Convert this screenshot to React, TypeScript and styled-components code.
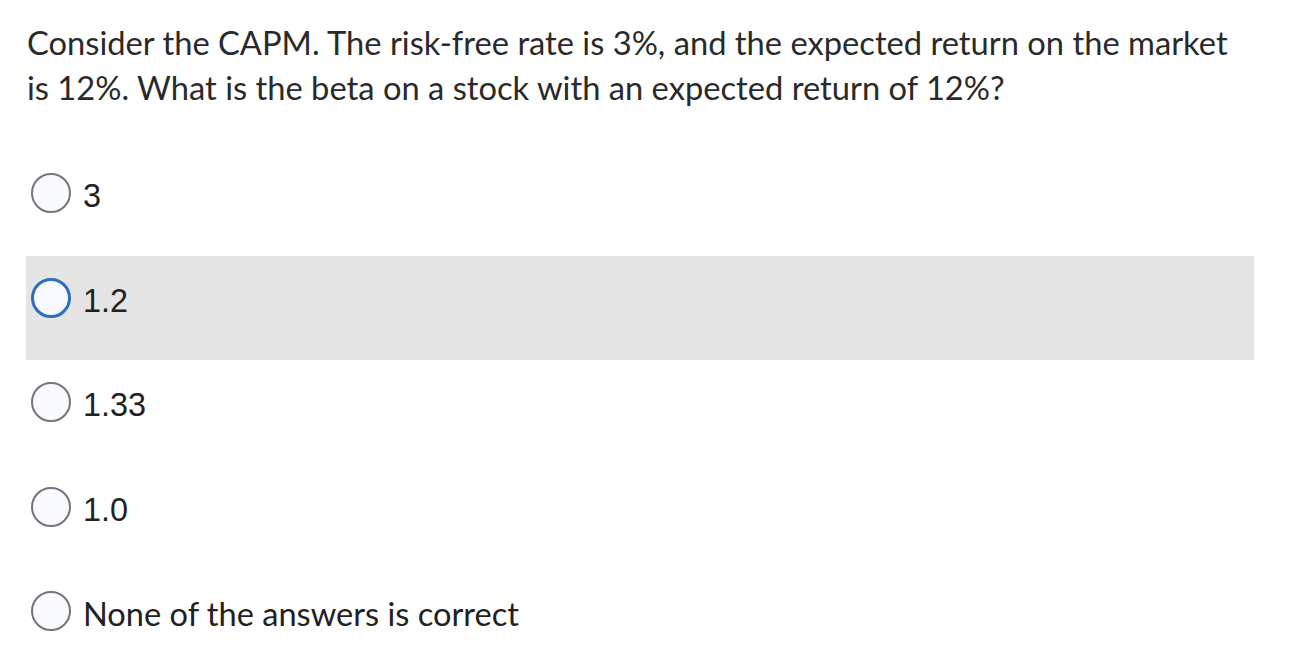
import React from "react";
import styled, { createGlobalStyle } from "styled-components";

const Global = createGlobalStyle`
  html, body { margin: 0; padding: 0; background: #ffffff; }
  body { font-family: Lato, "Noto Sans", sans-serif; color: #2d2d2d; }
`;

const Page = styled.div`
  padding: 20px 0 0 0;
  width: 1290px;
`;

const Question = styled.div`
  font-family: Lato, sans-serif;
  font-size: 32.7px;
  line-height: 45px;
  color: #2a2a2a;
  margin-left: 27px;
  width: 1215px;
`;

const Options = styled.div`
  display: flex;
  flex-direction: column;
  margin: 41px 0 0 26px;
  width: 1228px;
`;

const Row = styled.label<{ $hover?: boolean }>`
  display: flex;
  align-items: flex-start;
  gap: 12px;
  height: 104.5px;
  box-sizing: border-box;
  padding: 22px 0 0 5px;
  background: ${(p) => (p.$hover ? "#e5e5e5" : "transparent")};
  cursor: pointer;
`;

const Radio = styled.span<{ $hover?: boolean }>`
  flex: none;
  width: 40px;
  height: 40px;
  box-sizing: border-box;
  border-radius: 50%;
  border: ${(p) => (p.$hover ? "3px solid #2b6fc0" : "2px solid #757575")};
  background: #f8faff;
`;

const Label = styled.span<{ $num?: boolean }>`
  font-family: ${(p) => (p.$num ? '"Liberation Sans", Arial, sans-serif' : "Lato, sans-serif")};
  font-size: ${(p) => (p.$num ? "32.4px" : "32.6px")};
  line-height: 40px;
  color: #222;
  margin-top: 3px;
`;

const options = [
  { text: "3", num: true },
  { text: "1.2", num: true, hover: true },
  { text: "1.33", num: true },
  { text: "1.0", num: true },
  { text: "None of the answers is correct", num: false },
];

export default function App() {
  return (
    <Page>
      <Global />
      <Question>
        Consider the CAPM. The risk-free rate is 3%, and the expected return on the market is 12%. What is the
        beta on a stock with an expected return of 12%?
      </Question>
      <Options>
        {options.map((o) => (
          <Row key={o.text} $hover={o.hover}>
            <Radio $hover={o.hover} />
            <Label $num={o.num}>{o.text}</Label>
          </Row>
        ))}
      </Options>
    </Page>
  );
}
